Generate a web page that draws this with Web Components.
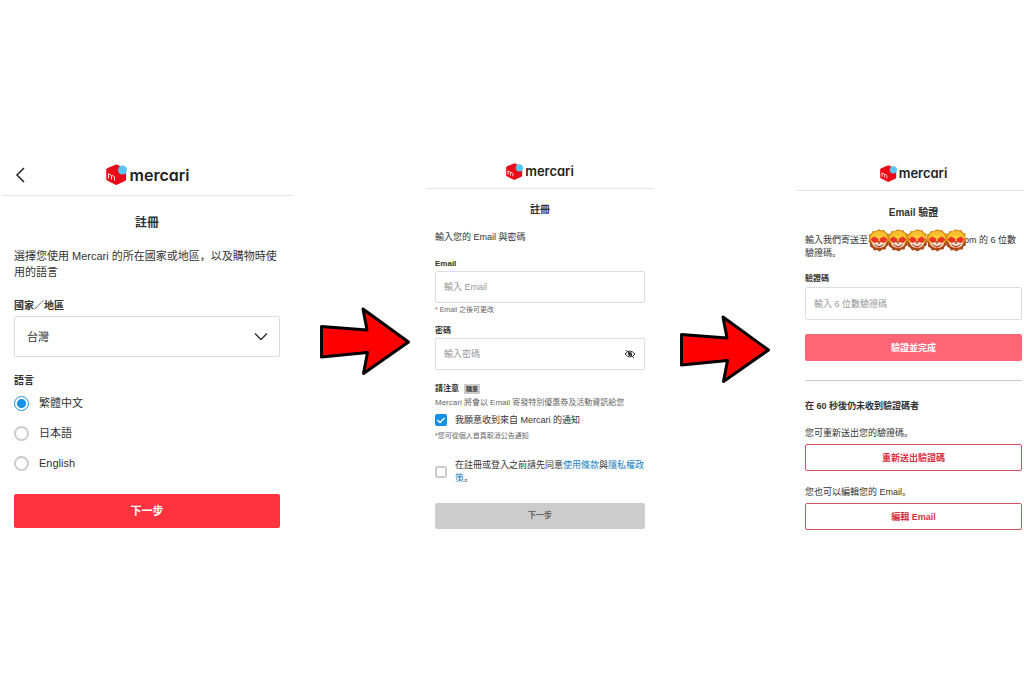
<!DOCTYPE html>
<html lang="zh-Hant">
<head>
<meta charset="utf-8">
<meta name="viewport" content="width=device-width, initial-scale=1">
<title>Mercari 註冊</title>
<style>
  body {
    margin: 0;
    background: #fff;
    color: #333;
    font-family: "Liberation Sans", "Noto Sans CJK JP", sans-serif;
    font-feature-settings: "locl" 0;
  }
</style>
</head>
<body>
<signup-flow>
  <region-step></region-step>
  <flow-arrow></flow-arrow>
  <email-step></email-step>
  <flow-arrow class="lower"></flow-arrow>
  <verify-step></verify-step>
</signup-flow>

<script>
const define = (name, html) => {
  const template = document.createElement('template');
  template.innerHTML = html;
  customElements.define(name, class extends HTMLElement {
    constructor() {
      super();
      this.attachShadow({ mode: 'open' }).append(template.content.cloneNode(true));
    }
  });
};

/* Rules that every form step shares */
const base = `
  :host { display: block; min-width: 0; }
  * { box-sizing: border-box; }
  h2, h3, p, fieldset { margin: 0; padding: 0; border: 0; min-width: 0; }
  h2 { text-align: center; line-height: 18px; font-weight: 700; }
  form { display: flex; flex-direction: column; font-size: 9px; line-height: 12px; }
  .label { font-weight: 700; font-size: 8px; line-height: 14px; padding: 0; }
  .hint { font-size: 7px; color: #666; }
  button, input, select { font: inherit; font-feature-settings: inherit; color: inherit; margin: 0; }
  .field {
    width: 100%; height: 32px; padding: 0 8px;
    border: 1px solid #ddd; border-radius: 2px; background: #fff; outline: 0;
  }
  .field::placeholder { color: #999; opacity: 1; }
  .btn {
    width: 100%; height: 27px; padding: 0; border: 0; border-radius: 2px;
    color: #fff; font-weight: 700; text-align: center;
  }
  .btn.outline { background: #fff; border: 1px solid #d8515e; color: #d9303f; }
`;

define('signup-flow', `
  <style>
    :host {
      display: grid;
      grid-template-columns: 291fr 133fr 228fr 142fr 228fr;
      align-items: start;
      padding: 154px 0 24px 2px;
    }
  </style>
  <slot></slot>`);

define('flow-arrow', `
  <style>
    :host { display: flex; justify-content: center; padding: 152px 0 0 10px; }
    :host(.lower) { padding: 160px 0 0; }
    svg { display: block; width: 92px; height: 70px; flex: none; }
  </style>
  <svg viewBox="0 0 92 70" aria-hidden="true">
    <path d="M2.500 20.500L48 24L44 3L89.500 36L44.500 67.500L48.500 46.500L2.500 51Z" fill="#f00" stroke="#000" stroke-width="3" stroke-linejoin="round"/>
  </svg>`);

define('mercari-logo', `
  <style>
    :host { display: inline-flex; align-items: center; gap: 2px; font-size: 13px; }
    :host([large]) { font-size: 16px; gap: 3px; }
    svg { width: 17px; height: 17px; flex: none; }
    :host([large]) svg { width: 21px; height: 21px; }
    span { font-family: Inter, sans-serif; font-weight: 600; font-feature-settings: "cv11"; line-height: 20px; color: #222; }
  </style>
  <svg viewBox="0 0 42 42" aria-hidden="true">
    <path d="M19 1.500Q21 .500 23 1.500L38 9Q40 10 40 12V31Q40 33 38 34L23 41Q21 42 19 41L3 33Q1 32 1 30V11Q1 9 3 8Z" fill="#e60b18"/>
    <path d="M21 19L1 10V30Q1 32 3 33L21 42Z" fill="#f50514"/>
    <path d="M5 29V19M5 23Q6 19 9 21Q11 22 11 25V31M11 25Q12 22 15 24Q17 25 17 28V33" fill="none" stroke="#fff" stroke-width="2"/>
    <circle cx="33" cy="12" r="9" fill="#5cc3f2"/>
  </svg>
  <span>mercari</span>`);

define('step-header', `
  <style>
    :host {
      display: grid; grid-template-columns: 1fr auto 1fr; align-items: center;
      box-sizing: border-box; height: 37px; border-bottom: 1px solid #e5e5e5;
    }
  </style>
  <div><slot name="back"></slot></div>
  <slot></slot>`);

define('region-step', `
  <style>
    ${base}
    step-header { height: 42px; }
    .back { display: block; margin-left: 12px; padding: 0; border: 0; background: none; }
    .back svg { display: block; width: 12px; height: 18px; }
    form { padding: 0 13px 0 12px; font-size: 11px; line-height: 16px; }
    h2 { font-size: 12px; margin-top: 18px; }
    p { margin-top: 16px; }
    .label { font-size: 10px; }
    .label.country { margin-top: 19px; }
    .select { display: grid; align-items: center; margin-top: 3px; }
    .select > * { grid-area: 1 / 1; }
    select.field { appearance: none; height: 41px; padding: 0 12px; }
    .select svg { justify-self: end; width: 14px; height: 9px; margin-right: 12px; pointer-events: none; }
    fieldset { margin-top: 17px; }
    fieldset label { display: flex; align-items: center; gap: 10px; height: 30px; }
    input {
      appearance: none; width: 15px; height: 15px; border-radius: 50%;
      border: 2px solid #ccc; background: #fff;
    }
    input:checked { border: 1px solid #1592e6; background: radial-gradient(circle, #1592e6 4px, #fff 5px); }
    .btn { height: 34px; margin-top: 16px; background: #ff333f; }
  </style>
  <step-header>
    <button class="back" slot="back" type="button" aria-label="返回">
      <svg viewBox="0 0 12 18"><path d="M10 2L3 9L10 16" fill="none" stroke="#222" stroke-width="1.500"/></svg>
    </button>
    <mercari-logo large></mercari-logo>
  </step-header>
  <form>
    <h2>註冊</h2>
    <p>選擇您使用 Mercari 的所在國家或地區，以及購物時使用的語言</p>
    <label class="label country" for="country">國家／地區</label>
    <div class="select">
      <select class="field" id="country"><option>台灣</option></select>
      <svg viewBox="0 0 14 9"><path d="M1 1.500L7 7.500L13 1.500" fill="none" stroke="#333" stroke-width="1.400"/></svg>
    </div>
    <fieldset>
      <legend class="label">語言</legend>
      <label><input type="radio" name="lang" checked>繁體中文</label>
      <label><input type="radio" name="lang">日本語</label>
      <label><input type="radio" name="lang">English</label>
    </fieldset>
    <button class="btn" type="button">下一步</button>
  </form>`);

define('email-step', `
  <style>
    ${base}
    step-header { height: 35px; }
    form { padding: 0 9px; }
    h2 { font-size: 10px; margin-top: 12px; }
    .intro { margin-top: 12px; }
    .email { margin-top: 14px; }
    .email-hint { margin-top: 1px; }
    .password { margin-top: 8px; }
    .secret { display: grid; align-items: center; }
    .secret > * { grid-area: 1 / 1; }
    .eye { justify-self: end; margin: 0 9px 0 0; padding: 0; border: 0; background: none; }
    .eye svg { display: block; width: 12px; height: 10px; }
    .notice { display: flex; align-items: center; gap: 5px; margin-top: 12px; }
    .badge { padding: 0 2px; background: #ccc; font-size: 6px; line-height: 10px; font-weight: 700; }
    .sub { margin-top: 1px; font-size: 8px; color: #666; }
    .check { display: flex; align-items: center; gap: 8px; margin-top: 5px; }
    .check input {
      appearance: none; flex: none; width: 12px; height: 12px;
      border: 2px solid #ccc; border-radius: 2px; background: #fff;
    }
    .check input:checked {
      border: 0;
      background: #1592e6 url("data:image/svg+xml,%3Csvg xmlns='http://www.w3.org/2000/svg' viewBox='0 0 12 12'%3E%3Cpath d='M2.500 6L5 8.500L9.500 4' fill='none' stroke='white' stroke-width='1.300'/%3E%3C/svg%3E");
    }
    .cancel { margin-top: 4px; }
    .check.terms { margin-top: 17px; line-height: 13px; }
    a { color: #1a7fc0; text-decoration: none; }
    .btn { height: 26px; margin-top: 18px; background: #ccc; color: #666; font-size: 8px; }
  </style>
  <step-header><mercari-logo></mercari-logo></step-header>
  <form>
    <h2>註冊</h2>
    <p class="intro">輸入您的 Email 與密碼</p>
    <label class="label email" for="email">Email</label>
    <input class="field" id="email" type="email" placeholder="輸入 Email">
    <p class="hint email-hint">* Email 之後可更改</p>
    <label class="label password" for="password">密碼</label>
    <div class="secret">
      <input class="field" id="password" type="password" placeholder="輸入密碼">
      <button class="eye" type="button" aria-label="顯示密碼">
        <svg viewBox="0 0 12 10"><path d="M1 5Q6-1 11 5Q6 11 1 5Z" fill="none" stroke="#333"/><circle cx="6" cy="5" r="2" fill="#333"/><path d="M2 1L10 9" stroke="#333"/></svg>
      </button>
    </div>
    <div class="notice"><span class="label">請注意</span><span class="badge">隨意</span></div>
    <p class="sub">Mercari 將會以 Email 寄發特別優惠券及活動資訊給您</p>
    <label class="check"><input type="checkbox" checked><span>我願意收到來自 Mercari 的通知</span></label>
    <p class="hint cancel">*您可從個人首頁取消公告通知</p>
    <label class="check terms"><input type="checkbox"><span>在註冊或登入之前請先同意<a href="#terms">使用條款</a>與<a href="#privacy">隱私權政策</a>。</span></label>
    <button class="btn" type="button">下一步</button>
  </form>`);

define('lion-sticker', `
  <style>
    :host { display: block; width: 22px; height: 23px; }
    svg { display: block; width: 100%; height: 100%; }
  </style>
  <svg viewBox="0 0 44 46" aria-hidden="true">
    <path d="M22 1L27 3L33 3L35 7L41 10L40 16L43 21L41 26L42 32L37 35L35 41L29 41L23 45L18 42L12 43L9 38L4 35L4 29L1 24L3 18L2 12L7 9L10 4L16 4Z" fill="#a94a18"/>
    <path d="M22 1L27 3L33 3L35 7L41 10L40 16L43 21L39 25H5L1 24L3 18L2 12L7 9L10 4L16 4Z" fill="#dc9518"/>
    <ellipse cx="22" cy="20" rx="17" ry="16" fill="#f8bf2e"/>
    <path d="M8 27Q22 20 36 27Q35 37 22 38Q10 37 8 27Z" fill="#fbe3c8"/>
    <path d="M5 21L12 15L20 19H24L32 15L39 21L33 28L24 26H20L12 28Z" fill="#ed3527"/>
    <path d="M22 14V24M17 15H27" fill="none" stroke="#ffd53d" stroke-width="3"/>
    <path d="M19 27H25L22 30Z" fill="#4b1c13"/>
    <path d="M13 31Q22 39 31 31" fill="none" stroke="#7b2b1c" stroke-width="2"/>
    <path d="M18 35Q22 33 26 35L22 38Z" fill="#e03a31"/>
  </svg>`);

define('verify-step', `
  <style>
    ${base}
    step-header { padding: 2px 2px 0 9px; }
    form { padding: 0 2px 0 9px; }
    h2 { font-size: 10px; margin-top: 13px; }
    .sent { margin-top: 12px; line-height: 13px; }
    .mask { display: inline-grid; grid-template-columns: repeat(5, minmax(0, 1fr)); width: 96px; height: 12px; vertical-align: middle; align-items: center; }
    .mask lion-sticker { margin: -6px 0; position: relative; }
    .code { margin-top: 12px; }
    .field { height: 33px; margin-top: 1px; }
    .verify { margin-top: 14px; background: #ff6676; }
    hr { width: 100%; height: 1px; margin: 19px 0 0; border: 0; background: #ccc; }
    h3 { margin-top: 19px; font-size: 9px; line-height: 12px; }
    .alt { margin-top: 15px; }
    .outline { margin-top: 5px; }
  </style>
  <step-header><mercari-logo></mercari-logo></step-header>
  <form>
    <h2>Email 驗證</h2>
    <p class="sent">輸入我們寄送至<span class="mask"><lion-sticker></lion-sticker><lion-sticker></lion-sticker><lion-sticker></lion-sticker><lion-sticker></lion-sticker><lion-sticker></lion-sticker></span>om 的 6 位數驗證碼。</p>
    <label class="label code" for="code">驗證碼</label>
    <input class="field" id="code" type="text" inputmode="numeric" placeholder="輸入 6 位數驗證碼">
    <button class="btn verify" type="button">驗證並完成</button>
    <hr>
    <h3>在 60 秒後仍未收到驗證碼者</h3>
    <p class="alt">您可重新送出您的驗證碼。</p>
    <button class="btn outline" type="button">重新送出驗證碼</button>
    <p class="alt">您也可以編輯您的 Email。</p>
    <button class="btn outline" type="button">編輯 Email</button>
  </form>`);
</script>
</body>
</html>
